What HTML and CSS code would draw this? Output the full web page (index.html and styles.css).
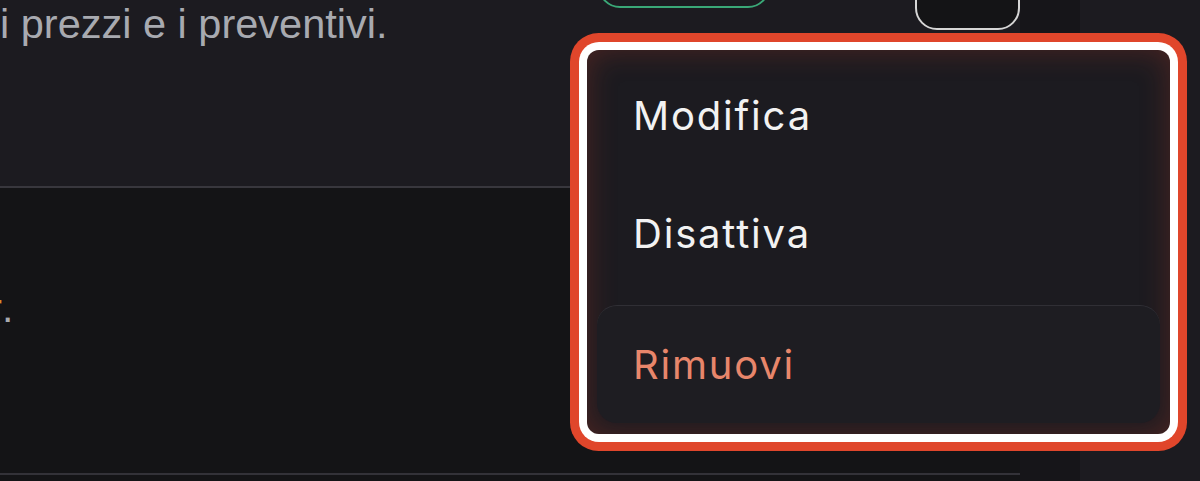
FILE: index.html
```html
<!DOCTYPE html>
<html lang="it">
<head>
    <meta charset="UTF-8">
    <meta name="viewport" content="width=device-width, initial-scale=1.0">
    <title>Listino</title>
    <link rel="stylesheet" href="styles.css">
</head>
<body>
    <div id="page">
        <main class="content">
            <section class="card card-top">
                <div class="card-row">
                    <p class="lead">i prezzi e i preventivi.</p>
                    <div class="actions">
                        <button class="btn btn-green"></button>
                        <button class="btn btn-icon"></button>
                    </div>
                </div>
            </section>
            <section class="card card-bottom">
                <p class="note"><span class="accent">r</span>.</p>
            </section>
        </main>
        <div class="gutter"></div>
        <aside class="side"></aside>

        <div class="menu">
            <div class="menu-item">Modifica</div>
            <div class="menu-item">Disattiva</div>
            <div class="menu-item danger">Rimuovi</div>
        </div>
    </div>
</body>
</html>
```

FILE: styles.css
```css
body {
    margin: 0;
    padding: 0;
    background-color: #141416;
    font-family: "Liberation Sans", Arial, sans-serif;
    overflow: hidden;
}

#page {
    position: relative;
    display: flex;
    width: 1200px;
    height: 481px;
}

.content {
    width: 1020px;
    display: flex;
    flex-direction: column;
}

.card-top {
    height: 186px;
    background-color: #1c1b20;
    border-bottom: 2px solid #38373d;
}

.card-row {
    display: flex;
    align-items: flex-start;
}

.lead {
    flex: 1;
    margin: 0;
    font-size: 41.5px;
    line-height: 48px;
    color: #a8aab0;
    white-space: nowrap;
}

.actions {
    display: flex;
    align-items: flex-start;
    gap: 145px;
    padding-left: 40px;
}

.btn {
    background: none;
    border-radius: 22px;
    padding: 0;
    cursor: pointer;
}

.btn-green {
    width: 172px;
    height: 48px;
    margin-top: -40px;
    border: 2px solid #3aa877;
}

.btn-icon {
    width: 105px;
    height: 56px;
    margin-top: -26px;
    background-color: #141416;
    border: 2px solid #d6d6d6;
}

.card-bottom {
    height: 285px;
    background-color: #141416;
    border-bottom: 2px solid #333238;
}

.note {
    margin: 96px 0 0 -6px;
    font-size: 41px;
    line-height: 48px;
    color: #a8aab0;
}

.accent {
    color: #d98a2b;
    display: inline-block;
    width: 8px;
    overflow: hidden;
    vertical-align: top;
    direction: rtl;
}

.gutter {
    width: 60px;
    background-color: #161519;
}

.side {
    flex: 1;
    background-color: #1c1b20;
}

/* menu a tendina sopra la lista */
.menu {
    position: absolute;
    left: 587px;
    top: 50px;
    width: 583px;
    height: 384px;
    box-sizing: border-box;
    padding: 6px 10px 11px;
    display: flex;
    flex-direction: column;
    background-color: #1c1b20;
    border-radius: 12px;
    box-shadow: 0 0 0 8px #ffffff, 0 0 0 17px #e0462b, inset 0 0 30px rgba(190, 60, 40, 0.3);
    font-family: Inter, "Noto Sans", sans-serif;
}

.menu-item {
    height: 118px;
    display: flex;
    align-items: center;
    padding-left: 36px;
    font-size: 40px;
    letter-spacing: 1.8px;
    color: #f2f2f2;
    border-radius: 20px;
    border-top: 1px solid transparent;
}

.menu-item.danger {
    margin-top: 12px;
    color: #e8866b;
    background-color: #1e1d22;
    border-top-color: #302f35;
}
```
